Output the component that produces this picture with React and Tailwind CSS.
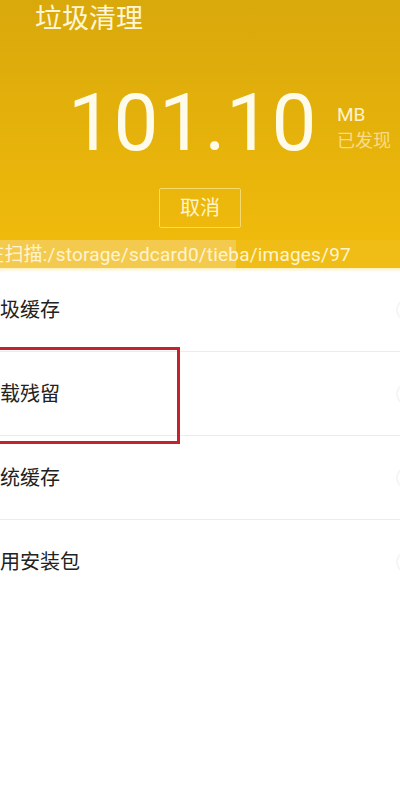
import React from 'react';

const font = { fontFamily: 'Roboto, "Noto Sans CJK SC", sans-serif' };

const rows = ['垃圾缓存', '卸载残留', '系统缓存', '无用安装包'];

const Row = ({ label, last }) => (
    <div className={`h-[84px] flex items-center justify-between ${last ? '' : 'border-b border-[#ececec]'}`}>
        <span className="ml-[-20px] text-[20px] text-[#222] leading-none">{label}</span>
        <span className="mr-[-18px] w-[22px] h-[22px] rounded-full border-2 border-[#f5f5f5]" />
    </div>
);

export default function App() {
    return (
        <div className="relative w-[400px] h-[789px] overflow-hidden bg-white" style={font}>
            <div className="h-[240px] bg-gradient-to-b from-[#d9a80b] to-[#efba0b] flex flex-col">
                <div className="h-[38px] flex items-center pl-[35px]">
                    <span className="text-[27px] leading-none text-[#fff6d8]">垃圾清理</span>
                </div>
                <div className="flex pl-[68px] mt-[45px]">
                    <span className="text-[80px] leading-none text-[#fffbea] tracking-[0.5px]">101.10</span>
                    <div className="ml-[20px] mt-[22px] flex flex-col items-start">
                        <span className="text-[19px] leading-none text-[#fff3cc]">MB</span>
                        <span className="mt-[8px] text-[18px] leading-none text-[#f8dc88]">已发现</span>
                    </div>
                </div>
                <div className="flex justify-center mt-[25px]">
                    <button className="w-[82px] h-[40px] border-[1.5px] border-[#f7d96e] rounded-[2px] text-[20px] text-[#fff3cc] flex items-center justify-center">
                        取消
                    </button>
                </div>
            </div>
            <div className="relative h-[28px] bg-[#f0bd16] overflow-hidden">
                <div className="absolute inset-y-0 left-0 w-[236px] bg-[#f4ca4e]" />
                <div className="relative h-full flex items-center ml-[-34px] text-[19px] tracking-[0.2px] text-[#fff4cf] whitespace-nowrap leading-none">
                    正在扫描:/storage/sdcard0/tieba/images/97
                </div>
            </div>
            <div className="h-[4px] bg-gradient-to-b from-[#fbeeb8] to-white" />
            <div className="mt-[-4px]">
                {rows.map((r, i) => (
                    <Row key={r} label={r} last={i === rows.length - 1} />
                ))}
            </div>
            <div className="absolute left-[-10px] top-[347px] w-[190px] h-[97px] border-[3px] border-[#c6222e]" />
        </div>
    );
}
